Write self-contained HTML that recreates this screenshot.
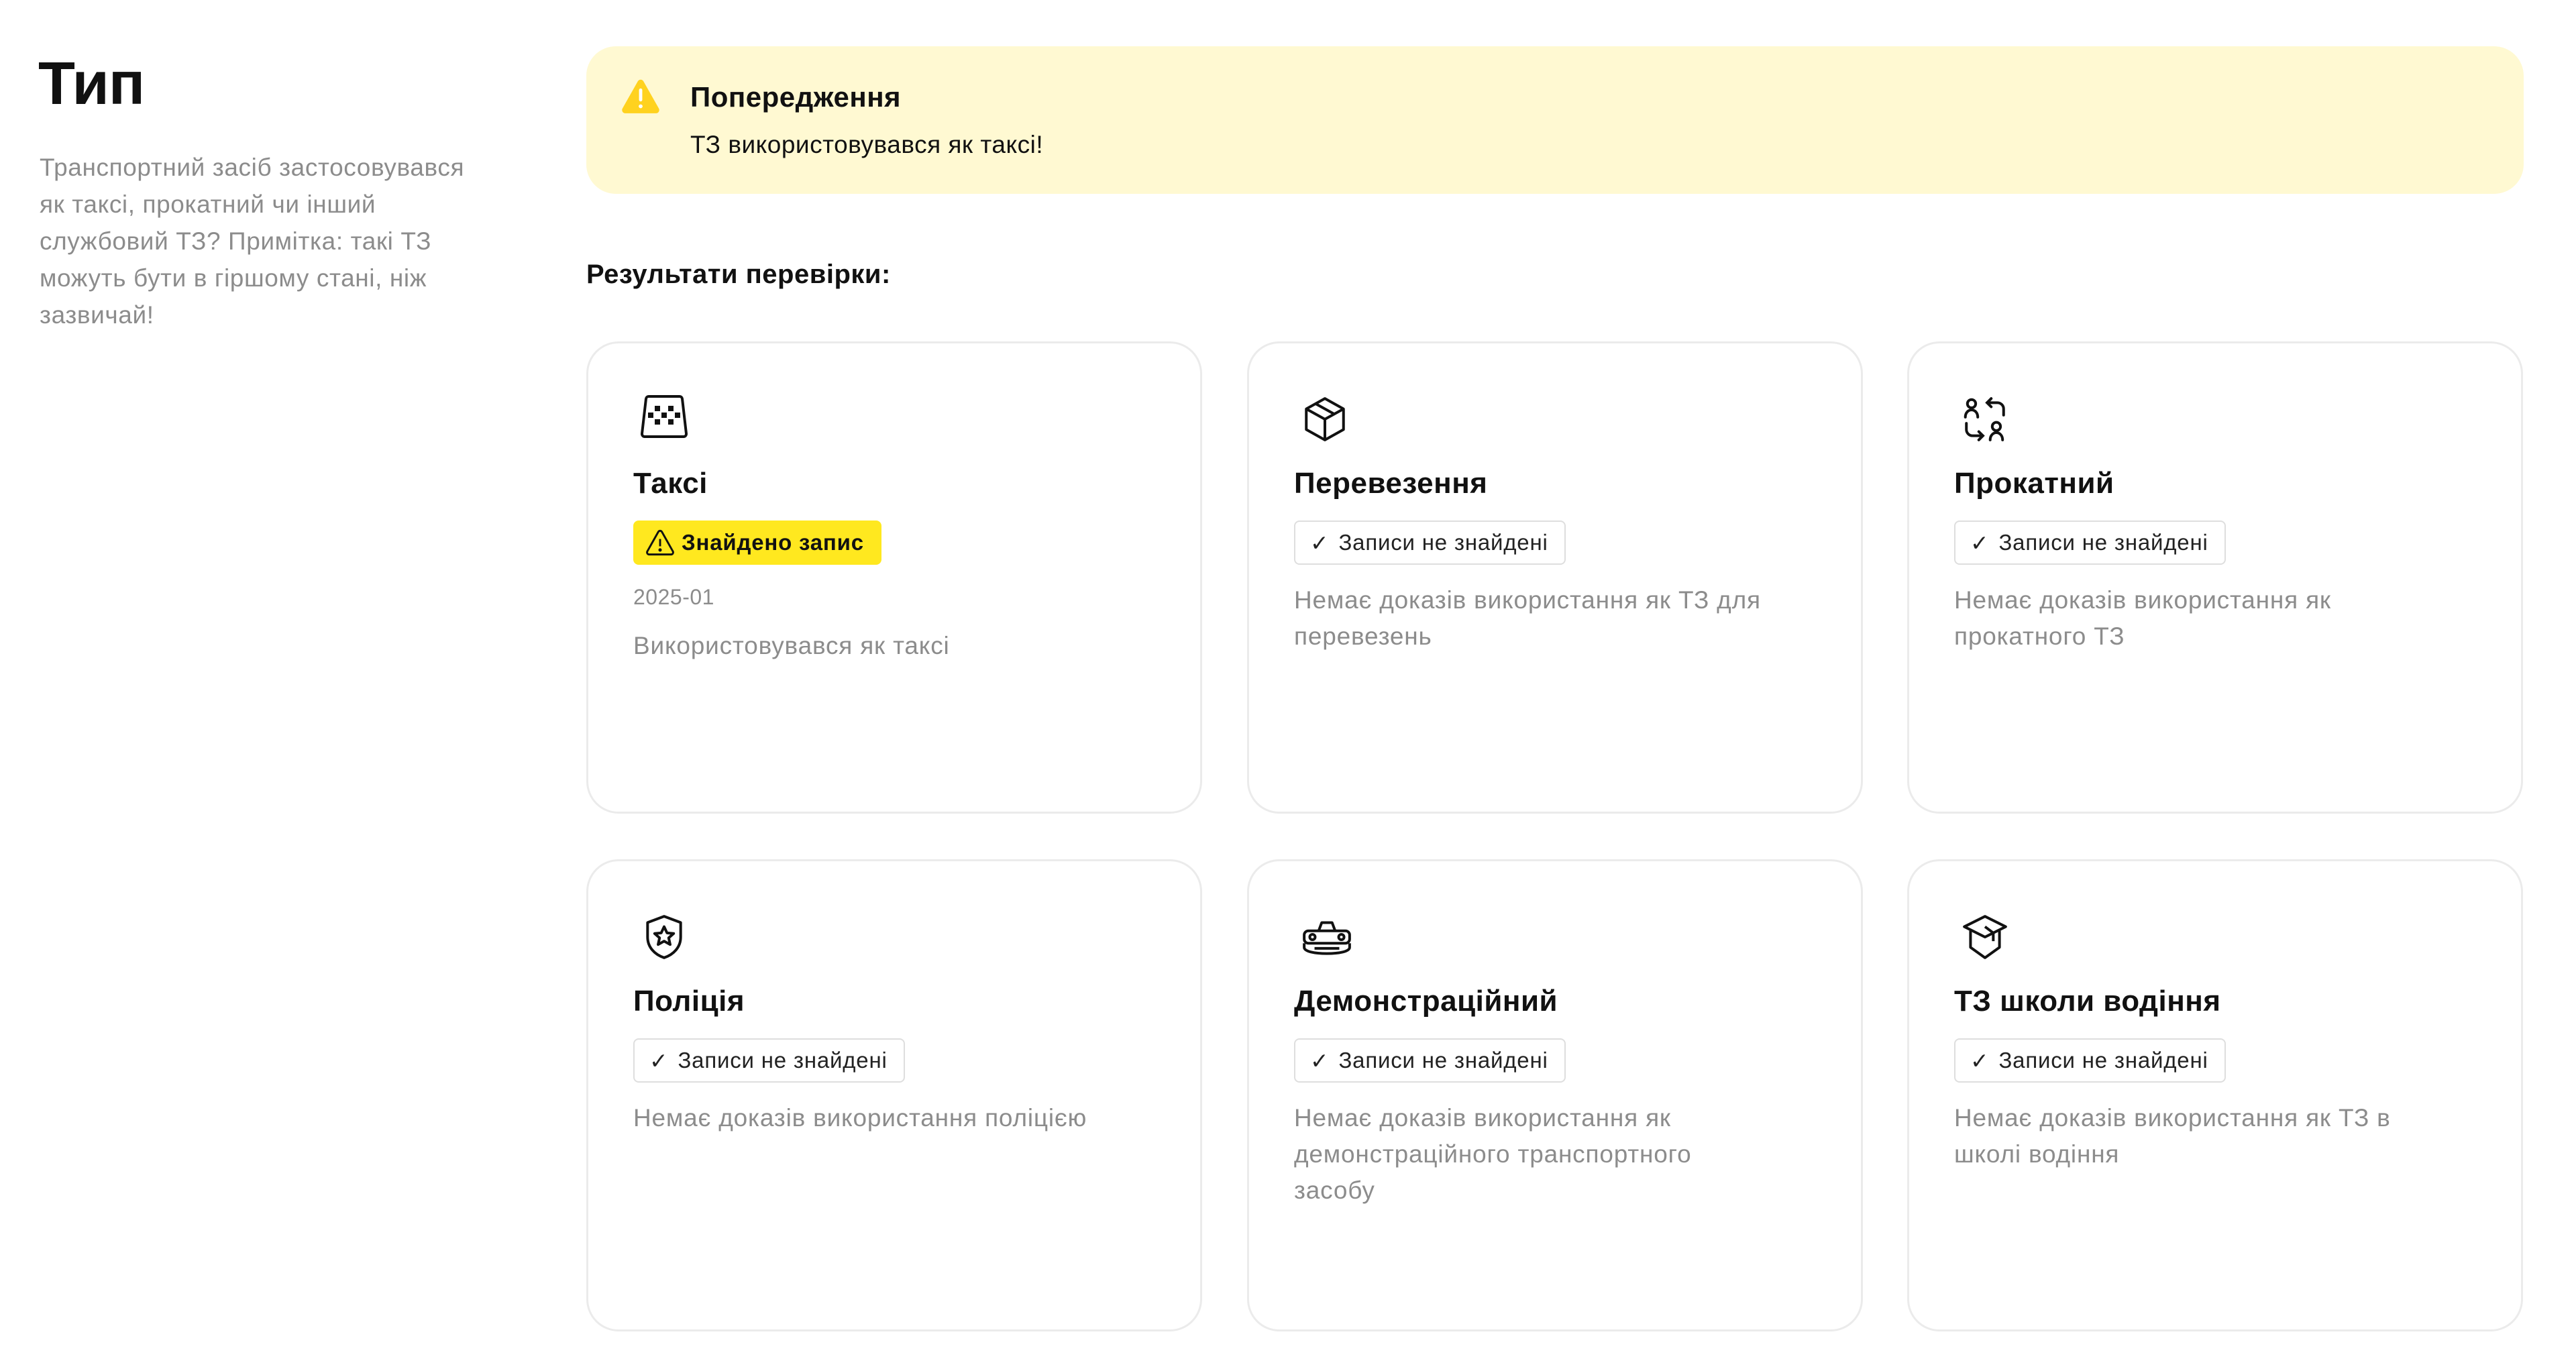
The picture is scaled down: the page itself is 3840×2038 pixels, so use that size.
<!DOCTYPE html>
<html><head><meta charset="utf-8"><style>
*{margin:0;padding:0;box-sizing:border-box}
body{width:3840px;height:2038px;background:#fff;font-family:"Liberation Sans","DejaVu Sans",sans-serif;color:#111;position:relative;overflow:hidden}
.abs{position:absolute}
h1{position:absolute;left:57px;top:74px;font-size:90px;font-weight:bold;letter-spacing:-1px}
.desc{position:absolute;left:59px;top:222px;width:760px;font-size:37px;line-height:55px;color:#8c8c8c;letter-spacing:0.6px;white-space:nowrap}
.alert{position:absolute;left:874px;top:69px;width:2888px;height:220px;background:#fff9d2;border-radius:44px}
.alert .t{position:absolute;left:155px;top:52px;font-size:42px;font-weight:bold;letter-spacing:0.5px}
.alert .s{position:absolute;left:155px;top:126px;font-size:37px;letter-spacing:0.5px}
.res{position:absolute;left:874px;top:387px;font-size:40px;font-weight:bold;letter-spacing:0.5px}
.card{position:absolute;width:918px;height:704px;border:3px solid #ebebeb;border-radius:48px;padding:0 0 0 67px}
.card svg.ic{position:absolute;left:76px;top:76px}
.card .ti{position:absolute;left:67px;top:184px;font-size:44px;font-weight:bold;letter-spacing:0.5px}
.badge{position:absolute;left:67px;top:264px;height:66px;border-radius:8px;font-size:33px;display:flex;align-items:center;padding:0 24px 0 22px;letter-spacing:0.8px}
.ok{border:2px solid #dedede;background:#fff;color:#222}
.found{background:#ffe81f;font-weight:bold;color:#111;padding:0 26px 0 18px}
.card .d{position:absolute;left:67px;top:356px;width:730px;font-size:37px;line-height:54px;color:#8c8c8c;letter-spacing:0.8px}
.date{position:absolute;left:67px;top:360px;font-size:32px;color:#8c8c8c;letter-spacing:0.5px}
</style></head><body>
<h1>Тип</h1>
<div class="desc">Транспортний засіб застосовувався<br>як таксі, прокатний чи інший<br>службовий ТЗ? Примітка: такі ТЗ<br>можуть бути в гіршому стані, ніж<br>зазвичай!</div>
<div class="alert">
<svg class="abs" style="left:52px;top:48px" width="58" height="54" viewBox="0 0 24 22"><path d="M10.3 1.5a2 2 0 0 1 3.4 0l9.5 16.8A2 2 0 0 1 21.5 21.3H2.5A2 2 0 0 1 .8 18.3Z" fill="#ffd21f"/><rect x="11" y="6" width="2" height="8" rx="1" fill="#fff"/><circle cx="12" cy="17" r="1.2" fill="#fff"/></svg>
<div class="t">Попередження</div>
<div class="s">ТЗ використовувався як таксі!</div>
</div>
<div class="res">Результати перевірки:</div>

<div class="card" style="left:874px;top:509px">
<svg class="ic" width="74" height="66" viewBox="0 0 74 66" fill="none" stroke="#111" stroke-width="4"><path d="M14 3h46a4 4 0 0 1 4 3.5l6 52a4 4 0 0 1-4 4.5H8a4 4 0 0 1-4-4.5l6-52A4 4 0 0 1 14 3Z"/><g fill="#111" stroke="none"><rect x="23" y="17" width="8" height="8"/><rect x="43" y="17" width="8" height="8"/><rect x="13" y="27" width="8" height="8"/><rect x="33" y="27" width="8" height="8"/><rect x="53" y="27" width="8" height="8"/><rect x="23" y="37" width="8" height="8"/><rect x="43" y="37" width="8" height="8"/></g></svg>
<div class="ti">Таксі</div>
<div class="badge found"><svg width="44" height="40" viewBox="0 0 24 22" fill="none" stroke="#111" stroke-width="1.6" style="margin-right:10px"><path d="M10.5 2.2a1.7 1.7 0 0 1 3 0l9 16a1.7 1.7 0 0 1-1.5 2.5H3a1.7 1.7 0 0 1-1.5-2.5Z"/><path d="M12 8v6"/><circle cx="12" cy="17" r=".6" fill="#111"/></svg>Знайдено запис</div>
<div class="date">2025-01</div>
<div class="d" style="top:424px">Використовувався як таксі</div>
</div>

<div class="card" style="left:1859px;top:509px">
<svg class="ic" width="74" height="74" viewBox="0 0 24 24" fill="none" stroke="#111" stroke-width="1.3" stroke-linejoin="round"><path d="M12 2 21 7v10l-9 5-9-5V7Z"/><path d="M3 7l9 5 9-5M12 12v10M7.5 4.5l9 5"/></svg>
<div class="ti">Перевезення</div>
<div class="badge ok"><span style="margin-right:14px">✓</span>Записи не знайдені</div>
<div class="d">Немає доказів використання як ТЗ для перевезень</div>
</div>

<div class="card" style="left:2843px;top:509px">
<svg class="ic" width="74" height="74" viewBox="0 0 24 24" fill="none" stroke="#111" stroke-width="1.3" stroke-linecap="round"><circle cx="5.5" cy="4.5" r="2"/><path d="M2.5 11c0-2 1.3-3.5 3-3.5s3 1.5 3 3.5"/><circle cx="17.5" cy="15.5" r="2"/><path d="M14.5 22c0-2 1.3-3.5 3-3.5s3 1.5 3 3.5"/><path d="M13 4h5a3 3 0 0 1 3 3v3M15 2l-2 2 2 2"/><path d="M3 14v3a3 3 0 0 0 3 3h5M9 18l2 2-2 2"/></svg>
<div class="ti">Прокатний</div>
<div class="badge ok"><span style="margin-right:14px">✓</span>Записи не знайдені</div>
<div class="d" style="width:680px">Немає доказів використання як прокатного ТЗ</div>
</div>

<div class="card" style="left:874px;top:1281px">
<svg class="ic" width="74" height="74" viewBox="0 0 24 24" fill="none" stroke="#111" stroke-width="1.3" stroke-linejoin="round"><path d="M12 2 20 5v7c0 5-3.5 8.5-8 10-4.5-1.5-8-5-8-10V5Z"/><path d="M12 7l1.4 3 3.2.3-2.4 2.1.7 3.2L12 14l-2.9 1.6.7-3.2-2.4-2.1 3.2-.3Z"/></svg>
<div class="ti">Поліція</div>
<div class="badge ok"><span style="margin-right:14px">✓</span>Записи не знайдені</div>
<div class="d">Немає доказів використання поліцією</div>
</div>

<div class="card" style="left:1859px;top:1281px">
<svg class="ic" width="80" height="74" viewBox="0 0 26 24" fill="none" stroke="#111" stroke-width="1.3" stroke-linejoin="round"><path d="M9 9l1.5-4h5L17 9"/><path d="M4 9h18a2 2 0 0 1 2 2v2a2 2 0 0 1-2 2H4a2 2 0 0 1-2-2v-2a2 2 0 0 1 2-2Z"/><circle cx="6" cy="12" r="1.3"/><circle cx="20" cy="12" r="1.3"/><path d="M2 15v2c0 2 5 3 11 3s11-1 11-3v-2"/><path d="M7 17.5h12"/></svg>
<div class="ti">Демонстраційний</div>
<div class="badge ok"><span style="margin-right:14px">✓</span>Записи не знайдені</div>
<div class="d" style="width:680px">Немає доказів використання як демонстраційного транспортного засобу</div>
</div>

<div class="card" style="left:2843px;top:1281px">
<svg class="ic" width="74" height="74" viewBox="0 0 24 24" fill="none" stroke="#111" stroke-width="1.3" stroke-linejoin="round"><path d="M12 2 22 7l-10 5L2 7Z"/><path d="M5 9v8l7 5 7-5V9"/><path d="M12 7l4 3v4"/></svg>
<div class="ti">ТЗ школи водіння</div>
<div class="badge ok"><span style="margin-right:14px">✓</span>Записи не знайдені</div>
<div class="d">Немає доказів використання як ТЗ в школі водіння</div>
</div>
</body></html>
